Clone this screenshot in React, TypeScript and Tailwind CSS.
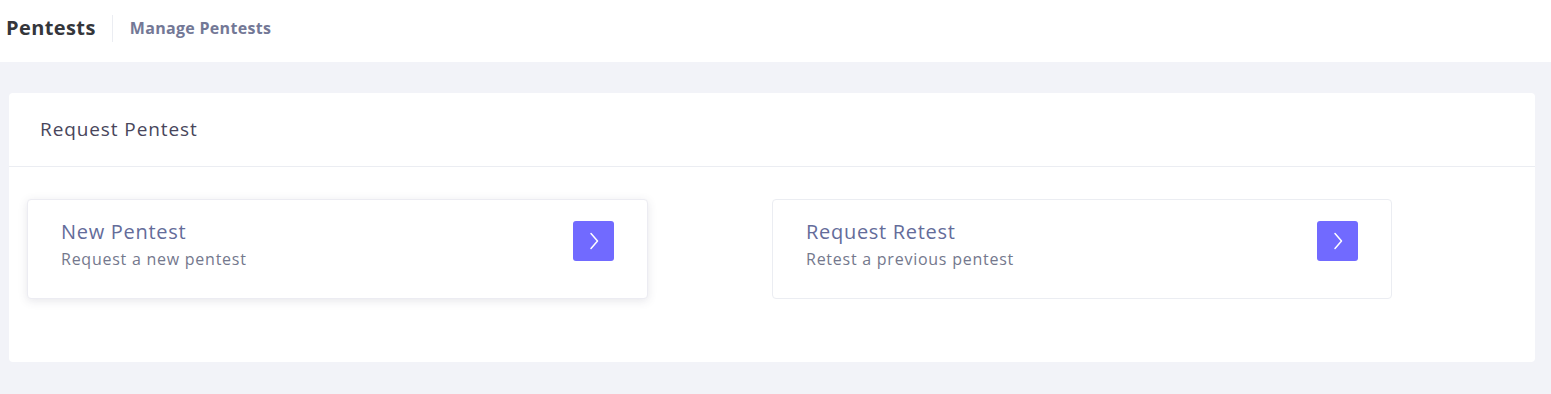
const ArrowButton = () => (
  <button className="mt-[21px] w-[41px] h-[40px] rounded-[3px] bg-[#716aff] flex items-center justify-center">
    <svg width="16" height="18" viewBox="0 0 16 18" fill="none">
      <path d="M5 1.5 L11.5 9 L5 16.5" stroke="white" strokeWidth="1.5" strokeLinecap="round" strokeLinejoin="round" />
    </svg>
  </button>
)

const OptionCard = ({ title, subtitle, raised }: { title: string; subtitle: string; raised?: boolean }) => (
  <div
    className={
      raised
        ? "w-[621px] h-[100px] rounded-[4px] bg-white border border-[#ececf2] shadow-[0_2px_10px_rgba(60,60,90,0.13)] flex items-start justify-between pl-[33px] pr-[33px]"
        : "w-[620px] h-[100px] rounded-[4px] bg-white border border-[#ebedf2] flex items-start justify-between pl-[33px] pr-[33px]"
    }
  >
    <div className="flex flex-col pt-[19px]">
      <span className="text-[20px] leading-[26px] tracking-[0.7px] text-[#646c9a]">{title}</span>
      <span className="text-[16px] leading-[22px] tracking-[0.75px] text-[#74788d] mt-[3px]">{subtitle}</span>
    </div>
    <ArrowButton />
  </div>
)

export default function App() {
  return (
    <div className="w-[1551px] h-[394px] bg-[#f2f3f8] flex flex-col" style={{ fontFamily: '"Open Sans", "Liberation Sans", sans-serif' }}>
      <div className="h-[62px] bg-white flex items-center pl-[6px] pb-[6px]">
        <h1 className="text-[20px] font-bold tracking-[0.4px] text-[#34363b] pr-[16px]">Pentests</h1>
        <div className="w-px h-[27px] bg-[#ebedf2]" />
        <span className="pl-[17px] text-[16px] font-bold tracking-[0.3px] text-[#737896]">Manage Pentests</span>
      </div>
      <div className="mt-[31px] ml-[9px] mr-[16px] h-[269px] bg-white rounded-[4px] flex flex-col">
        <div className="h-[74px] border-b border-[#ebedf2] flex items-center pl-[31px]">
          <h3 className="text-[19px] tracking-[0.9px] text-[#48465b]">Request Pentest</h3>
        </div>
        <div className="pt-[32px] pl-[18px] flex gap-[124px]">
          <OptionCard title="New Pentest" subtitle="Request a new pentest" raised />
          <OptionCard title="Request Retest" subtitle="Retest a previous pentest" />
        </div>
      </div>
    </div>
  )
}
